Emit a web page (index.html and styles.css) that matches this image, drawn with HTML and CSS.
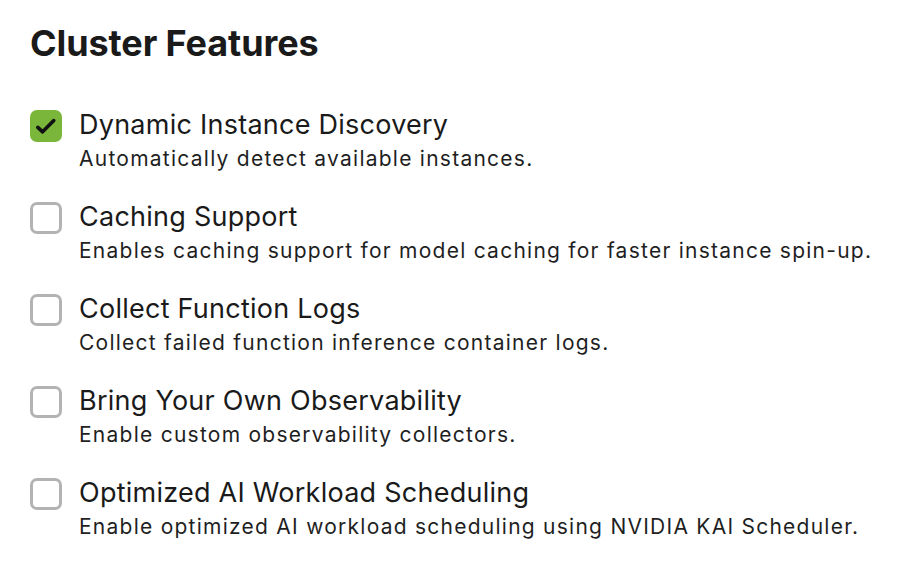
FILE: index.html
```html
<!DOCTYPE html>
<html lang="en">
<head>
<meta charset="utf-8">
<title>Cluster Features</title>
<link rel="stylesheet" href="styles.css">
</head>
<body>
<main class="panel">
  <h1 class="title">Cluster Features</h1>
  <ul class="features">
    <li class="feature">
      <span class="box checked">
        <svg viewBox="0 0 32 32" width="32" height="32"><path d="M7.8 17.4 L12.6 21.8 L23.8 10.6" fill="none" stroke="#111" stroke-width="3.6" stroke-linecap="round" stroke-linejoin="round"/></svg>
      </span>
      <div class="text">
        <div class="label">Dynamic Instance Discovery</div>
        <div class="desc">Automatically detect available instances.</div>
      </div>
    </li>
    <li class="feature">
      <span class="box"></span>
      <div class="text">
        <div class="label">Caching Support</div>
        <div class="desc">Enables caching support for model caching for faster instance spin-up.</div>
      </div>
    </li>
    <li class="feature">
      <span class="box"></span>
      <div class="text">
        <div class="label">Collect Function Logs</div>
        <div class="desc">Collect failed function inference container logs.</div>
      </div>
    </li>
    <li class="feature">
      <span class="box"></span>
      <div class="text">
        <div class="label">Bring Your Own Observability</div>
        <div class="desc">Enable custom observability collectors.</div>
      </div>
    </li>
    <li class="feature">
      <span class="box"></span>
      <div class="text">
        <div class="label">Optimized AI Workload Scheduling</div>
        <div class="desc">Enable optimized AI workload scheduling using NVIDIA KAI Scheduler.</div>
      </div>
    </li>
  </ul>
</main>
</body>
</html>
```
FILE: styles.css
```css
html, body {
  margin: 0;
  padding: 0;
  background: #ffffff;
}
body {
  font-family: Inter, "Noto Sans", "Liberation Sans", sans-serif;
  color: #1a1a1a;
}
.panel {
  padding: 21px 30px 0 30px;
}
.title {
  margin: 0;
  font-size: 36px;
  line-height: 44px;
  font-weight: 700;
  letter-spacing: -0.1px;
  color: #1a1a1a;
}
.features {
  list-style: none;
  margin: 43px 0 0 0;
  padding: 0;
  display: flex;
  flex-direction: column;
  gap: 24px;
}
.feature {
  display: flex;
  align-items: flex-start;
  gap: 17px;
}
.box {
  flex: 0 0 auto;
  width: 32px;
  height: 32px;
  margin-top: 2px;
  box-sizing: border-box;
  border: 3px solid #b3b3b3;
  border-radius: 7px;
  display: flex;
  align-items: center;
  justify-content: center;
}
.box.checked {
  background: #7ab63a;
  border: none;
}
.box svg {
  display: block;
}
.label {
  font-size: 27px;
  line-height: 34px;
  font-weight: 400;
  letter-spacing: 0.25px;
  color: #1a1a1a;
}
.desc {
  font-size: 21px;
  line-height: 34px;
  letter-spacing: 1.25px;
  color: #1f1f1f;
}
```
